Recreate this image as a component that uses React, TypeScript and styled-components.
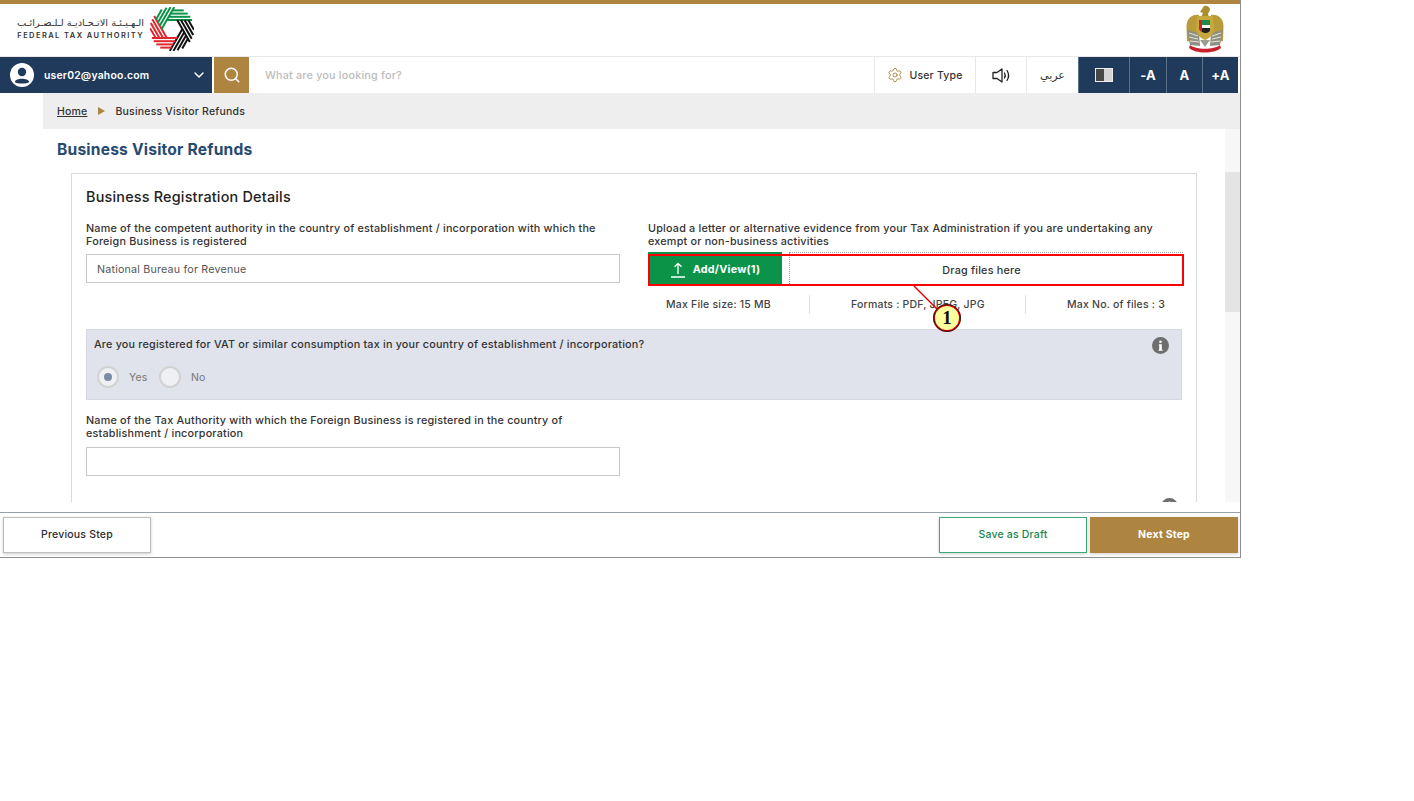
import React from "react";
import styled, { createGlobalStyle } from "styled-components";
import { ChevronDown, Search, Settings } from "lucide-react";

const GlobalStyle = createGlobalStyle`
  html, body {
    margin: 0;
    padding: 0;
    background: #fff;
    font-family: Inter, "Noto Sans", "Liberation Sans", sans-serif;
    letter-spacing: 0.2px;
    color: #333;
  }
  * { box-sizing: border-box; }
`;

const Frame = styled.div`
  position: relative;
  width: 1241px;
  height: 558px;
  border-right: 1px solid #8f8f8f;
  border-bottom: 1px solid #8f8f8f;
  display: flex;
  flex-direction: column;
  overflow: hidden;
`;

const GoldStrip = styled.div`
  height: 4px;
  flex: none;
  background: #ad8440;
`;

const Masthead = styled.header`
  height: 52px;
  flex: none;
  display: flex;
  align-items: center;
  justify-content: space-between;
  padding: 0 16px 3px 17px;
`;

const Brand = styled.div`
  display: flex;
  align-items: center;
  gap: 6px;
`;

const BrandText = styled.div`
  display: flex;
  flex-direction: column;
  align-items: flex-end;
  gap: 2px;
  padding-top: 1px;
  color: #333;
`;

const BrandArabic = styled.span`
  font-family: "DejaVu Sans", sans-serif;
  font-size: 9.8px;
  line-height: 12px;
  letter-spacing: 0;
  white-space: nowrap;
`;

const BrandLatin = styled.span`
  font-size: 7.5px;
  line-height: 10px;
  font-weight: 600;
  letter-spacing: 1.42px;
  white-space: nowrap;
`;

const NavBar = styled.nav`
  height: 37px;
  flex: none;
  display: flex;
  border-top: 1px solid #e8e8e8;
  padding-right: 2px;
`;

const UserMenu = styled.div`
  width: 212px;
  display: flex;
  align-items: center;
  padding: 0 5px 0 10px;
  background: #1f3a5a;
  color: #fff;
  font-size: 10.4px;
  font-weight: 600;
`;

const UserName = styled.span`
  flex: 1;
  margin-left: 10px;
`;

const SearchButton = styled.div`
  width: 35px;
  margin-left: 2px;
  display: flex;
  align-items: center;
  justify-content: center;
  background: #ad8440;
  color: #fff;
`;

const SearchField = styled.div`
  flex: 1;
  display: flex;
  align-items: center;
  padding-left: 16px;
  color: #bdbdbd;
  font-size: 10.8px;
  font-weight: 500;
`;

const ToolCell = styled.div<{ $w: number }>`
  width: ${(p) => p.$w}px;
  flex: none;
  display: flex;
  align-items: center;
  justify-content: center;
  gap: 6px;
  border-left: 1px solid #e8e8e8;
  color: #333;
  font-size: 10.5px;
  font-weight: 500;
`;

const ArabicLabel = styled.span`
  font-family: "DejaVu Sans", sans-serif;
  font-size: 11px;
  letter-spacing: 0;
`;

const DarkCell = styled.div<{ $w: number }>`
  width: ${(p) => p.$w}px;
  flex: none;
  display: flex;
  align-items: center;
  justify-content: center;
  background: #1f3a5a;
  border-left: 1px solid #5b7089;
  color: #fff;
  font-size: 13px;
  font-weight: 700;
`;

const ContrastIcon = styled.span`
  width: 18px;
  height: 14px;
  display: flex;
  border: 1px solid #ececec;
  background: #d4d4d4;
  &::before {
    content: "";
    width: 8px;
    background: #474747;
  }
`;

const Crumbs = styled.div`
  height: 36px;
  flex: none;
  margin-left: 43px;
  padding-left: 14px;
  display: flex;
  align-items: center;
  gap: 10.5px;
  background: #eeeeee;
  font-size: 10.5px;
  font-weight: 500;
  color: #333;
`;

const CrumbLink = styled.span`
  text-decoration: underline;
`;

const CrumbArrow = styled.span`
  width: 0;
  height: 0;
  border-left: 7px solid #ad8440;
  border-top: 4px solid transparent;
  border-bottom: 4px solid transparent;
`;

const Body = styled.div`
  height: 373px;
  flex: none;
  display: flex;
  overflow: hidden;
`;

const Main = styled.main`
  flex: 1;
  min-width: 0;
  padding: 11px 28px 0 57px;
`;

const PageTitle = styled.h1`
  margin: 0 0 14px;
  height: 19px;
  font-size: 15.6px;
  line-height: 19px;
  font-weight: 700;
  color: #274b70;
`;

const Card = styled.section`
  margin-left: 14px;
  padding: 13px 14px 0;
  border: 1px solid #d9d9d9;
  height: 400px;
`;

const CardTitle = styled.h2`
  margin: 0 0 16px;
  height: 19px;
  font-size: 14.4px;
  line-height: 19px;
  font-weight: 500;
  color: #222;
`;

const Columns = styled.div`
  display: grid;
  grid-template-columns: 534px 535px;
  column-gap: 28px;
`;

const FieldLabel = styled.label<{ $gap?: number }>`
  display: block;
  height: 26px;
  margin-bottom: ${(p) => p.$gap ?? 6}px;
  font-size: 10.8px;
  line-height: 13px;
  font-weight: 500;
  color: #333;
`;

const TextBox = styled.div`
  height: 29px;
  padding: 1px 10px 0;
  display: flex;
  align-items: center;
  border: 1px solid #c9c9c9;
  background: #fff;
  font-size: 10.7px;
  color: #555;
`;

const UploadRow = styled.div`
  height: 34px;
  display: flex;
`;

const UploadButton = styled.div`
  width: 134px;
  flex: none;
  display: flex;
  align-items: center;
  justify-content: center;
  gap: 7px;
  padding-top: 1px;
  background: #0b9449;
  color: #fff;
  font-size: 10.8px;
  font-weight: 700;
`;

const DropArea = styled.div`
  flex: 1;
  margin-left: 7px;
  padding: 2px 10px 0 0;
  display: flex;
  align-items: center;
  justify-content: center;
  border-top: 1px dotted #999;
  border-left: 1px dotted #999;
  font-size: 10.8px;
  font-weight: 500;
  color: #333;
`;

const Limits = styled.div`
  display: grid;
  grid-template-columns: 162px 216px 1fr;
  margin-top: 9px;
  height: 19px;
`;

const LimitCell = styled.div<{ $pad: number; $line?: boolean }>`
  display: flex;
  align-items: center;
  padding-left: ${(p) => p.$pad}px;
  border-right: ${(p) => (p.$line ? "1px solid #dfe3ec" : "none")};
  font-size: 10.5px;
  font-weight: 500;
  color: #444;
`;

const QuestionPanel = styled.div`
  margin-top: 15px;
  height: 71px;
  padding: 8px 12px 0 7px;
  background: #e0e3eb;
  border: 1px solid #d5d8e0;
`;

const QuestionHead = styled.div`
  display: flex;
  justify-content: space-between;
  font-size: 10.8px;
  font-weight: 500;
  line-height: 14px;
  color: #333;
`;

const RadioGroup = styled.div`
  display: flex;
  align-items: center;
  margin: 12px 0 0 3px;
  font-size: 10.5px;
  font-weight: 400;
  color: #777;
`;

const RadioOuter = styled.span<{ $on?: boolean }>`
  width: 22px;
  height: 22px;
  border-radius: 50%;
  border: 2px solid #d2d2d2;
  background: #eef0f4;
  display: flex;
  align-items: center;
  justify-content: center;
  &::after {
    content: "";
    width: 8px;
    height: 8px;
    border-radius: 50%;
    background: ${(p) => (p.$on ? "#7b8ba3" : "transparent")};
  }
`;

const RadioText = styled.span<{ $w: number }>`
  width: ${(p) => p.$w}px;
  padding-left: 10px;
`;

const LowerField = styled.div`
  margin-top: 14px;
  width: 534px;
`;

const NextInfo = styled.div`
  display: flex;
  justify-content: flex-end;
  margin-top: 23px;
  padding-right: 4px;
`;

const InfoMark = styled.svg`
  width: 17px;
  height: 17px;
  flex: none;
  margin-top: -1px;
`;

const ScrollTrack = styled.div`
  width: 15px;
  flex: none;
  background: #f7f7f7;
`;

const ScrollThumb = styled.div`
  height: 140px;
  margin-top: 43px;
  background: #e4e4e4;
`;

const Footer = styled.footer`
  margin-top: 10px;
  flex: 1;
  display: flex;
  align-items: flex-start;
  justify-content: space-between;
  padding: 4px 2px 0 3px;
  border-top: 1px solid #97a1ab;
`;

const FooterGroup = styled.div`
  display: flex;
  gap: 3px;
`;

const FooterButton = styled.button<{ $kind: "plain" | "draft" | "next" }>`
  width: 148px;
  height: 36px;
  padding: 0 0 1px;
  font-family: inherit;
  letter-spacing: inherit;
  font-size: 10.5px;
  font-weight: ${(p) => (p.$kind === "next" ? 700 : 500)};
  cursor: pointer;
  background: ${(p) => (p.$kind === "next" ? "#ad8440" : "#fff")};
  color: ${(p) =>
    p.$kind === "next" ? "#fff" : p.$kind === "draft" ? "#17864c" : "#2c2c2c"};
  border: 1px solid
    ${(p) =>
      p.$kind === "next" ? "#ad8440" : p.$kind === "draft" ? "#3fa877" : "#bdbdbd"};
  box-shadow: 0 1px 3px rgba(0, 0, 0, 0.2);
`;

const Callout = styled.div`
  position: absolute;
  left: 648px;
  top: 254px;
  width: 536px;
  height: 32px;
  border: 2px solid #f00;
  pointer-events: none;
`;

const CalloutLine = styled.svg`
  position: absolute;
  left: 910px;
  top: 284px;
  width: 40px;
  height: 34px;
  pointer-events: none;
`;

const CalloutBadge = styled.div`
  position: absolute;
  left: 933px;
  top: 304px;
  width: 28px;
  height: 28px;
  border-radius: 50%;
  border: 2px solid #e00000;
  outline: 1px solid #222;
  outline-offset: -1px;
  background: #ffff9e;
  display: flex;
  align-items: center;
  justify-content: center;
  font-family: "Liberation Serif", serif;
  font-size: 19px;
  font-weight: 700;
  letter-spacing: 0;
  color: #111;
`;

// pinwheel of the authority's logo: each stripe starts on the inner edge of
// the arm before it and runs out to the rim
const armColours = ["#0b9449", "#111", "#111", "#e0262e", "#e0262e", "#0b9449"];
const stripeOffsets = [9, 12.2, 15.4, 18.6];

const FtaMark = () => (
  <svg width="44" height="44" viewBox="-22 -22 44 44">
    {armColours.map((colour, k) => (
      <g key={k} transform={`rotate(${k * 60})`} stroke={colour} strokeWidth="2">
        {stripeOffsets.map((r) => (
          <line key={r} x1={(0.5 * r - 9) / 0.866} y1={-r} x2={Math.sqrt(22 * 22 - r * r)} y2={-r} />
        ))}
      </g>
    ))}
  </svg>
);

const Emblem = () => (
  <svg width="38" height="48" viewBox="0 0 38 48">
    <path d="M13 10 C6 9 1 13 0.500 21 L1 36 L13 38z" fill="#b89c3a" />
    <path d="M25 10 C32 9 37 13 37.500 21 L37 36 L25 38z" fill="#b89c3a" />
    <path d="M1 25 L13 28 L14 41 L4 40z" fill="#8f8f84" />
    <path d="M37 25 L25 28 L24 41 L34 40z" fill="#8f8f84" />
    <path d="M3 28l9 3M3 32l9 2M4 36l9 1M35 28l-9 3M35 32l-9 2M34 36l-9 1" stroke="#e6e6da" strokeWidth="1" />
    <path d="M18 1 c3-1 6 1 6 4 l-2 4 1 3 h-8 l2-4 -3-1z" fill="#a98f2f" />
    <path d="M11 11 h16 l1 12 c0 6-4 10-9 12 c-5-2-9-6-9-12z" fill="#c7a83c" />
    <path d="M16 15h8v5h-8z" fill="#1f8a4a" />
    <path d="M16 20h8v3h-8z" fill="#fff" />
    <path d="M16 23h8v3 c-2 2-5 3-8 1z" fill="#222" />
    <path d="M13 15h3v12 c-2-1-3-2-3-4z" fill="#d3232a" />
    <path d="M14 35 L19 42 L24 35z" fill="#9c9c90" />
    <path d="M4 40 C10 45 28 45 34 40 L35 43 C28 49 10 49 3 43z" fill="#c8202a" />
  </svg>
);

const Avatar = () => (
  <svg width="24" height="24" viewBox="0 0 24 24">
    <circle cx="12" cy="12" r="12" fill="#fff" />
    <circle cx="12" cy="9" r="4.2" fill="#1f3a5a" />
    <path d="M4.8 19 C5.500 14.600 18.500 14.600 19.200 19 C17 21 7 21 4.800 19z" fill="#1f3a5a" />
  </svg>
);

const SpeakerIcon = () => (
  <svg width="19" height="15" viewBox="0 0 19 15" fill="none" stroke="#222" strokeWidth="1.300">
    <path d="M1 4.500h4L10 1v13L5 10.500H1z" strokeLinejoin="round" />
    <path d="M12.500 5c.9 1.500.9 3.500 0 5M15 2.500c1.900 3 1.900 7 0 10" strokeLinecap="round" />
  </svg>
);

const UploadIcon = () => (
  <svg width="16" height="16" viewBox="0 0 16 16" fill="none" stroke="#fff" strokeWidth="1.300">
    <path d="M8 12V1.500M4.500 4.800 8 1.300l3.500 3.500M1 15h14" />
  </svg>
);

const InfoIcon = () => (
  <InfoMark viewBox="0 0 17 17">
    <circle cx="8.500" cy="8.500" r="8.500" fill="#6e6e6e" />
    <circle cx="8.500" cy="4.800" r="1.300" fill="#fff" />
    <path d="M7.200 7.300h2.600v5.400h1v1H6.500v-1h.7V8.300h-.7z" fill="#fff" />
  </InfoMark>
);

export default function App() {
  return (
    <>
      <GlobalStyle />
      <Frame>
        <GoldStrip />
        <Masthead>
          <Brand>
            <BrandText>
              <BrandArabic dir="rtl">الـهـيـئـة الاتـحـاديـة لـلـضـرائـب</BrandArabic>
              <BrandLatin>FEDERAL TAX AUTHORITY</BrandLatin>
            </BrandText>
            <FtaMark />
          </Brand>
          <Emblem />
        </Masthead>

        <NavBar>
          <UserMenu>
            <Avatar />
            <UserName>user02@yahoo.com</UserName>
            <ChevronDown size={16} strokeWidth={2.2} />
          </UserMenu>
          <SearchButton>
            <Search size={18} strokeWidth={2} />
          </SearchButton>
          <SearchField>What are you looking for?</SearchField>
          <ToolCell $w={101}>
            <Settings size={16} strokeWidth={1.4} color="#ad8440" />
            User Type
          </ToolCell>
          <ToolCell $w={51}>
            <SpeakerIcon />
          </ToolCell>
          <ToolCell $w={52}>
            <ArabicLabel>عربي</ArabicLabel>
          </ToolCell>
          <DarkCell $w={51}>
            <ContrastIcon />
          </DarkCell>
          <DarkCell $w={37}>-A</DarkCell>
          <DarkCell $w={36}>A</DarkCell>
          <DarkCell $w={36}>+A</DarkCell>
        </NavBar>

        <Crumbs>
          <CrumbLink>Home</CrumbLink>
          <CrumbArrow />
          <span>Business Visitor Refunds</span>
        </Crumbs>

        <Body>
          <Main>
            <PageTitle>Business Visitor Refunds</PageTitle>
            <Card>
              <CardTitle>Business Registration Details</CardTitle>
              <Columns>
                <div>
                  <FieldLabel>
                    Name of the competent authority in the country of establishment / incorporation with which the
                    Foreign Business is registered
                  </FieldLabel>
                  <TextBox>National Bureau for Revenue</TextBox>
                </div>
                <div>
                  <FieldLabel $gap={4}>
                    Upload a letter or alternative evidence from your Tax Administration if you are undertaking any
                    exempt or non-business activities
                  </FieldLabel>
                  <UploadRow>
                    <UploadButton>
                      <UploadIcon />
                      Add/View(1)
                    </UploadButton>
                    <DropArea>Drag files here</DropArea>
                  </UploadRow>
                  <Limits>
                    <LimitCell $pad={18} $line>Max File size: 15 MB</LimitCell>
                    <LimitCell $pad={41} $line>Formats : PDF, JPEG, JPG</LimitCell>
                    <LimitCell $pad={41}>Max No. of files : 3</LimitCell>
                  </Limits>
                </div>
              </Columns>

              <QuestionPanel>
                <QuestionHead>
                  Are you registered for VAT or similar consumption tax in your country of establishment / incorporation?
                  <InfoIcon />
                </QuestionHead>
                <RadioGroup>
                  <RadioOuter $on />
                  <RadioText $w={40}>Yes</RadioText>
                  <RadioOuter />
                  <RadioText $w={40}>No</RadioText>
                </RadioGroup>
              </QuestionPanel>

              <LowerField>
                <FieldLabel $gap={7}>
                  Name of the Tax Authority with which the Foreign Business is registered in the country of
                  establishment / incorporation
                </FieldLabel>
                <TextBox />
              </LowerField>
              <NextInfo>
                <InfoIcon />
              </NextInfo>
            </Card>
          </Main>
          <ScrollTrack>
            <ScrollThumb />
          </ScrollTrack>
        </Body>

        <Footer>
          <FooterButton $kind="plain">Previous Step</FooterButton>
          <FooterGroup>
            <FooterButton $kind="draft">Save as Draft</FooterButton>
            <FooterButton $kind="next">Next Step</FooterButton>
          </FooterGroup>
        </Footer>

        <Callout />
        <CalloutLine viewBox="0 0 40 34">
          <line x1="4" y1="2" x2="30" y2="28" stroke="#e00000" strokeWidth="1.500" />
        </CalloutLine>
        <CalloutBadge>1</CalloutBadge>
      </Frame>
    </>
  );
}
